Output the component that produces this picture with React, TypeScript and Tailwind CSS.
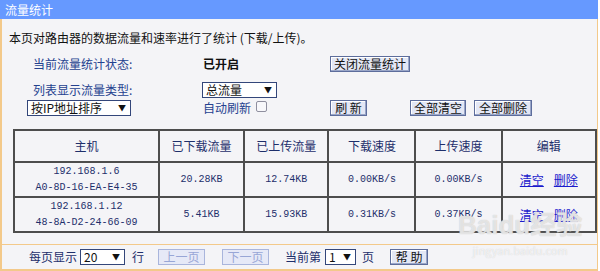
import React from "react";

const cn = '"Noto Sans CJK SC", "Liberation Sans", sans-serif';
const mono = '"Liberation Mono", "Noto Sans CJK SC", monospace';

function Btn({ children, w, disabled }: { children: React.ReactNode; w: string; disabled?: boolean }) {
  return (
    <button
      className={
        "h-[16px] flex items-center justify-center border text-[12px] leading-none " +
        w +
        (disabled
          ? " border-[#a9b5dc] bg-[#e6e9f7] text-[#98a6d6]"
          : " border-[#5d6d9c] bg-[#e3e7f5] text-[#111] shadow-[inset_-1px_-1px_0_#9aa6c8,inset_1px_1px_0_#ffffff]")
      }
    >
      {children}
    </button>
  );
}

function Select({ label, w }: { label: string; w: string }) {
  return (
    <div
      className={
        "h-[16px] flex items-center justify-between border border-[#33467a] bg-white pl-[3px] pr-[4px] text-[12px] leading-none text-[#111] " +
        w
      }
    >
      <span>{label}</span>
      <span className="text-[8px]">▼</span>
    </div>
  );
}

const heads = ["主机", "已下载流量", "已上传流量", "下载速度", "上传速度", "编辑"];
const widths = ["w-[143px]", "w-[84px]", "w-[83px]", "w-[86px]", "w-[85px]", "w-[93px]"];

const rows = [
  { ip: "192.168.1.6", mac: "A0-8D-16-EA-E4-35", down: "20.28KB", up: "12.74KB", ds: "0.00KB/s", us: "0.00KB/s" },
  { ip: "192.168.1.12", mac: "48-8A-D2-24-66-09", down: "5.41KB", up: "15.93KB", ds: "0.31KB/s", us: "0.37KB/s" },
];

export default function App() {
  return (
    <div className="w-[600px] h-[271px] bg-white overflow-hidden" style={{ fontFamily: cn }}>
      <div className="relative w-[598px] h-[271px] flex flex-col">
        {/* title bar */}
        <div className="h-[19px] bg-[#6699ff] flex items-center pl-[5px] text-[12px] text-white">流量统计</div>

        <div className="flex-1 flex flex-col bg-[#f4f4f7] border-l-2 border-r border-b-2 border-[#f3c98a]">
          <div className="mt-[11px] pl-[7px] h-[16px] flex items-center text-[12px] text-[#111]">
            本页对路由器的数据流量和速率进行了统计 (下载/上传)。
          </div>

          {/* status row */}
          <div className="mt-[10px] flex items-center h-[16px] text-[12px]">
            <div className="w-[201px] pl-[31px] text-[#24418f]">当前流量统计状态:</div>
            <div className="w-[127px] font-bold text-[#111]">已开启</div>
            <Btn w="w-[80px]">关闭流量统计</Btn>
          </div>

          {/* type row */}
          <div className="mt-[10px] flex items-center h-[16px] text-[12px]">
            <div className="w-[200px] pl-[31px] text-[#24418f]">列表显示流量类型:</div>
            <Select label="总流量" w="w-[75px]" />
          </div>

          <div className="mt-[1px] flex items-center h-[17px] text-[12px]">
            <div className="w-[201px] pl-[25px]">
              <Select label="按IP地址排序" w="w-[104px]" />
            </div>
            <div className="w-[127px] flex items-center text-[#24418f]">
              <span>自动刷新</span>
              <span className="ml-[5px] w-[11px] h-[11px] -mt-[3px] border border-[#8f8f9f] rounded-[2px] bg-[#f8f8fb]" />
            </div>
            <Btn w="w-[37px]">刷 新</Btn>
            <div className="w-[43px]" />
            <Btn w="w-[56px]">全部清空</Btn>
            <div className="w-[8px]" />
            <Btn w="w-[58px]">全部删除</Btn>
          </div>

          {/* table */}
          <table className="mt-[13px] ml-[11px] border-collapse border-2 border-[#4d4d4d] text-[#1e2f6b]">
            <thead>
              <tr className="h-[32px]">
                {heads.map((h, i) => (
                  <th key={h} className={"border-2 border-[#4d4d4d] font-normal text-[12px] text-center " + widths[i]}>
                    {h}
                  </th>
                ))}
              </tr>
            </thead>
            <tbody>
              {rows.map((r) => (
                <tr key={r.ip} className="h-[35px] text-[10px]" style={{ fontFamily: mono }}>
                  <td className="border-2 border-[#4d4d4d] text-center leading-[16px]">
                    <div>{r.ip}</div>
                    <div>{r.mac}</div>
                  </td>
                  <td className="border-2 border-[#4d4d4d] text-center">{r.down}</td>
                  <td className="border-2 border-[#4d4d4d] text-center">{r.up}</td>
                  <td className="border-2 border-[#4d4d4d] text-center">{r.ds}</td>
                  <td className="border-2 border-[#4d4d4d] text-center">{r.us}</td>
                  <td className="border-2 border-[#4d4d4d] text-center text-[12px]" style={{ fontFamily: cn }}>
                    <span className="text-[#1a1acc] underline">清空</span>
                    <span className="ml-[10px] text-[#1a1acc] underline">删除</span>
                  </td>
                </tr>
              ))}
            </tbody>
          </table>

          {/* footer */}
          <div className="mt-[11px] border-t border-[#f3c98a] flex-1 flex items-center text-[12px] text-[#1e2f6b]">
            <span className="ml-[27px]">每页显示</span>
            <div className="ml-[3px]">
              <Select label="20" w="w-[45px]" />
            </div>
            <span className="ml-[7px]">行</span>
            <div className="ml-[14px]">
              <Btn w="w-[47px]" disabled>上一页</Btn>
            </div>
            <div className="ml-[17px]">
              <Btn w="w-[47px]" disabled>下一页</Btn>
            </div>
            <span className="ml-[16px]">当前第</span>
            <div className="ml-[4px]">
              <Select label="1" w="w-[31px]" />
            </div>
            <span className="ml-[6px]">页</span>
            <div className="ml-[16px]">
              <Btn w="w-[38px]">帮 助</Btn>
            </div>
          </div>
        </div>

        {/* watermark */}
        <div className="absolute left-[458px] top-[212px] flex flex-col items-center pointer-events-none">
          <div
            className="text-[26px] leading-none font-bold text-white/60"
            style={{ fontFamily: '"Liberation Sans", "Noto Sans CJK SC", sans-serif', textShadow: "0 0 1px #b9b9b9" }}
          >
            Baidu经验
          </div>
          <div className="mt-[4px] text-[11px] text-white/70" style={{ textShadow: "0 0 1px #c9c9c9" }}>
            jingyan.baidu.com
          </div>
        </div>
      </div>
    </div>
  );
}
